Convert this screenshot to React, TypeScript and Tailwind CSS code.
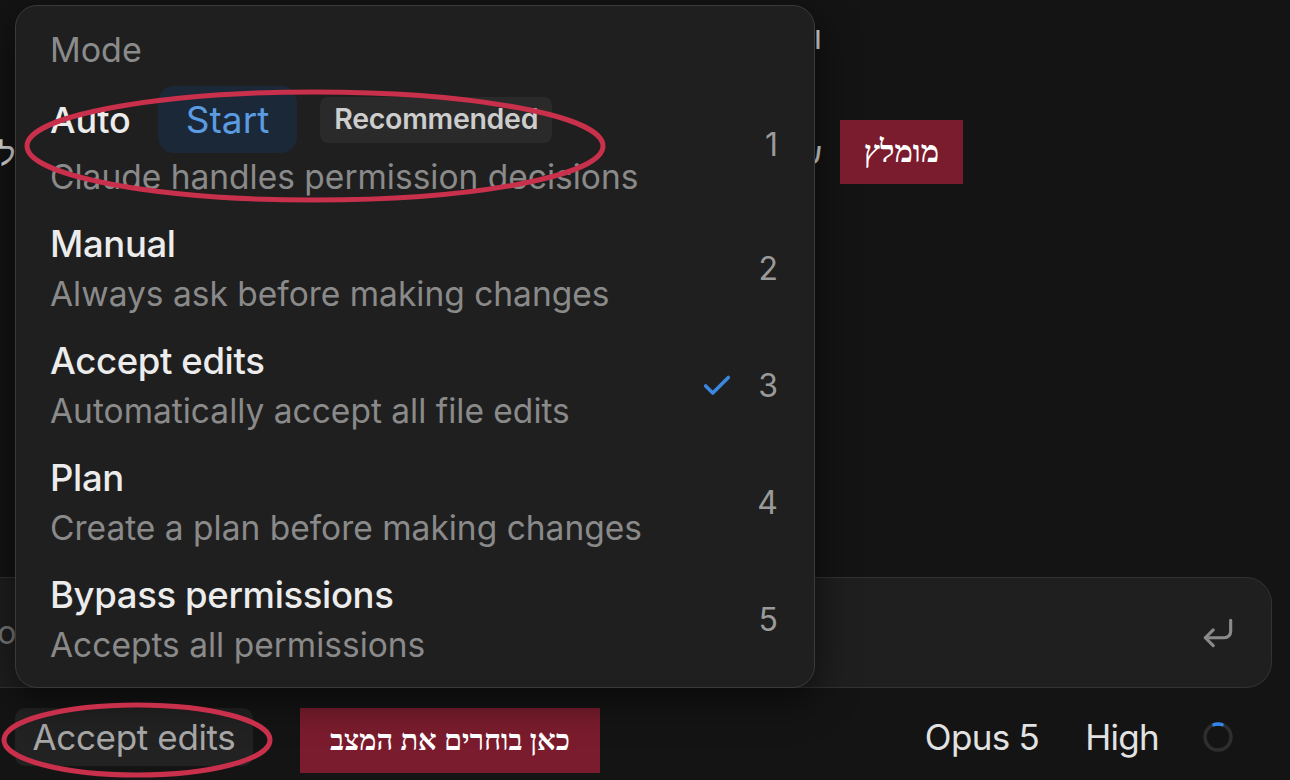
import { Check, CornerDownLeft } from "lucide-react"

const modes = [
  { title: "Manual", desc: "Always ask before making changes", key: "2" },
  { title: "Accept edits", desc: "Automatically accept all file edits", key: "3", active: true },
  { title: "Plan", desc: "Create a plan before making changes", key: "4" },
  { title: "Bypass permissions", desc: "Accepts all permissions", key: "5" },
]

const ui = { fontFamily: "Inter, 'Noto Sans', sans-serif" }
const heb = { fontFamily: "'Liberation Serif', 'DejaVu Sans', serif" }

const ModeMenu = () => {
  return (
    <div
      className="absolute left-[15px] top-[5px] w-[800px] h-[683px] rounded-[22px] border-[1.5px] border-[#3a3a3a] bg-[#1f1f1f] shadow-[0_10px_40px_rgba(0,0,0,0.6)] pl-[34px] pr-[36px] pt-[24px] flex flex-col gap-[17px]"
      style={ui}
    >
      <p className="h-[40px] leading-[40px] text-[34px] text-[#8b8b8b]">Mode</p>

      {/* Auto row */}
      <div className="flex items-center">
        <div className="flex-1">
          <div className="h-[65px] flex items-center">
            <span className="text-[36px] font-medium text-[#ececec]">Auto</span>
            <span className="ml-[27px] h-[67px] px-[28px] rounded-[16px] bg-[#1b2838] text-[#5b9be2] text-[37px] flex items-center">
              Start
            </span>
            <span className="ml-[23px] h-[46px] px-[14px] rounded-[8px] bg-[#2a2a2a] text-[#cdcdcd] text-[28.5px] font-semibold flex items-center tracking-[-0.01em]">
              Recommended
            </span>
          </div>
          <p className="h-[50px] leading-[50px] text-[33.5px] text-[#8a8a8a]">
            Claude handles permission decisions
          </p>
        </div>
        <span className="text-[32px] text-[#9a9a9a]">1</span>
      </div>

      {modes.map((m) => (
        <div key={m.key} className="flex items-center">
          <div className="flex-1">
            <p className="h-[50px] leading-[50px] text-[36.5px] font-medium text-[#ececec] tracking-[-0.01em]">
              {m.title}
            </p>
            <p className="h-[50px] leading-[50px] text-[33.5px] text-[#8a8a8a]">{m.desc}</p>
          </div>
          {m.active && <Check className="w-[34px] h-[34px] text-[#3b87e0] mr-[24px]" strokeWidth={2.5} />}
          <span className="text-[32px] text-[#9a9a9a]">{m.key}</span>
        </div>
      ))}
    </div>
  )
}

export default function App() {
  return (
    <div className="relative w-[1290px] h-[780px] overflow-hidden bg-[#141414] flex flex-col" style={ui}>
      {/* conversation behind the menu */}
      <div className="h-[577px] ml-[-300px] w-[1122px] pt-[16px] flex flex-col gap-[72px] text-[32px] text-[#dcdcdc] whitespace-nowrap" dir="rtl" style={ui}>
        <p className="leading-[44px]">ונבחר את מצב העבודה המתאים לפני שממשיכים</p>
        <p className="leading-[44px]">שימו לב: ברירת המחדל כאן היא עריכה אוטומטית של קבצים ללא אישורא</p>
      </div>

      {/* composer */}
      <div className="ml-[-40px] w-[1312px] h-[111px] rounded-[26px] border-[1.5px] border-[#333333] bg-[#1f1f1f] flex items-center pl-[26px] pr-[34px]">
        <span className="flex-1 text-[32px] text-[#7a7a7a]">to reply to Claude</span>
        <CornerDownLeft className="w-[38px] h-[38px] text-[#8a8a8a]" strokeWidth={2} />
      </div>

      {/* bottom bar */}
      <div className="mt-[20px] h-[58px] flex items-center pl-[15px] pr-[56px]">
        <button className="h-[58px] w-[238px] rounded-[10px] bg-[#222222] text-[35px] text-[#a8a8a8] tracking-[-0.01em]">
          Accept edits
        </button>
        <div
          className="ml-[47px] w-[300px] h-[65px] mt-[7px] bg-[#7a1c2d] text-white text-[29px] font-bold flex items-center justify-center"
          dir="rtl"
          style={heb}
        >
          כאן בוחרים את המצב
        </div>
        <div className="flex-1" />
        <span className="text-[35px] text-[#e2e2e2] tracking-[-0.02em]">Opus 5</span>
        <span className="ml-[46px] text-[35px] text-[#e2e2e2] tracking-[-0.02em]">High</span>
        <svg className="ml-[43px]" width="32" height="32" viewBox="0 0 32 32">
          <circle cx="16" cy="16" r="13" fill="none" stroke="#2e2e2e" strokeWidth="3.5" />
          <path d="M12 3.6 A13 13 0 0 1 20 3.6" fill="none" stroke="#2f86ee" strokeWidth="3.5" strokeLinecap="round" />
        </svg>
      </div>

      <ModeMenu />

      {/* annotations */}
      <div
        className="absolute left-[840px] top-[120px] w-[123px] h-[64px] bg-[#7a1c2d] text-white text-[31px] font-bold flex items-center justify-center"
        dir="rtl"
        style={heb}
      >
        מומלץ
      </div>
      <svg className="absolute left-0 top-0 pointer-events-none" width="1290" height="780">
        <ellipse cx="315" cy="146" rx="288" ry="54" fill="none" stroke="#c9304b" strokeWidth="5" />
        <ellipse cx="137" cy="740" rx="133" ry="35" fill="none" stroke="#c9304b" strokeWidth="5" />
      </svg>
    </div>
  )
}
